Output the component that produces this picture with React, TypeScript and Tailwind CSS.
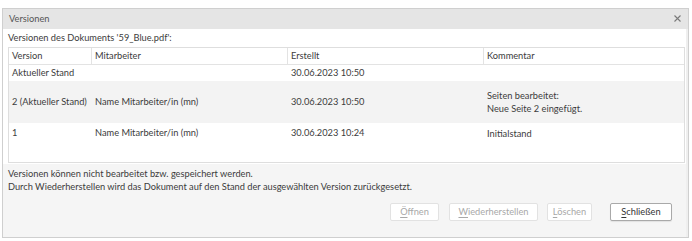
import React from 'react';

type Row = {
  version: string;
  user: string;
  created: string;
  comment: string[];
  shaded?: boolean;
  h: string;
};

const rows: Row[] = [
  { version: 'Aktueller Stand', user: '', created: '30.06.2023 10:50', comment: [], h: 'h-[16px]' },
  {
    version: '2 (Aktueller Stand)',
    user: 'Name Mitarbeiter/in (mn)',
    created: '30.06.2023 10:50',
    comment: ['Seiten bearbeitet:', 'Neue Seite 2 eingefügt.'],
    shaded: true,
    h: 'h-[42px]',
  },
  { version: '1', user: 'Name Mitarbeiter/in (mn)', created: '30.06.2023 10:24', comment: ['Initialstand'], h: 'h-[20px]' },
];

const cols = ['w-[83px]', 'w-[196px]', 'w-[196px]', 'flex-1'];

function DlgButton({ hotkey, rest, enabled, className }: { hotkey: string; rest: string; enabled?: boolean; className: string }) {
  return (
    <button
      className={
        'h-[18px] rounded-[2px] border bg-white leading-none ' +
        (enabled ? 'border-[#a9a9a9] text-[#333] shadow-[0_1px_1px_rgba(0,0,0,0.08)] ' : 'border-[#e2e2e2] text-[#a8a8a8] ') +
        className
      }
    >
      <span className="underline underline-offset-[2px]">{hotkey}</span>
      {rest}
    </button>
  );
}

export default function App() {
  return (
    <div className="w-[692px] h-[241px] bg-white pt-[8px] pl-[2px] text-[9.25px] text-[#3c3c3c]" style={{ fontFamily: 'Lato, "Noto Sans", sans-serif' }}>
      <div className="w-[687px] h-[230px] border border-[#cfcfcf] bg-[#efefef] flex flex-col">
        {/* Title bar */}
        <div className="h-[20px] bg-[#e5e5e5] flex items-center justify-between pl-[6px] pr-[7px] text-[#555]">
          <span>Versionen</span>
          <svg width="7" height="7" viewBox="0 0 7 7" className="mb-[1px]">
            <path d="M0.5 0.5 L6.5 6.5 M6.5 0.5 L0.5 6.5" stroke="#7a7a7a" strokeWidth="1.1" />
          </svg>
        </div>

        {/* Body */}
        <div className="flex-1 flex flex-col mr-[2px]">
          <div className="bg-white pl-[5px] pr-[1px] pb-[1px]">
            <div className="h-[18px] flex items-center">Versionen des Dokuments '59_Blue.pdf':</div>
            <div className="h-[116px] border border-[#dedede] flex flex-col">
              <div className="flex h-[17px] border-b border-[#e3e3e3]">
                {['Version', 'Mitarbeiter', 'Erstellt', 'Kommentar'].map((c, i) => (
                  <div key={c} className={cols[i] + ' flex items-center pl-[3px] ' + (i < 3 ? 'border-r border-[#e3e3e3]' : '')}>
                    {c}
                  </div>
                ))}
              </div>
              {rows.map((r) => (
                <div key={r.version} className={'flex items-center ' + r.h + (r.shaded ? ' bg-[#f3f3f3]' : '')}>
                  <div className={cols[0] + ' pl-[3px] whitespace-nowrap'}>{r.version}</div>
                  <div className={cols[1] + ' pl-[3px]'}>{r.user}</div>
                  <div className={cols[2] + ' pl-[3px]'}>{r.created}</div>
                  <div className={cols[3] + ' pl-[3px] leading-[13px]'}>
                    {r.comment.map((l) => (
                      <div key={l}>{l}</div>
                    ))}
                  </div>
                </div>
              ))}
            </div>
          </div>

          <div className="flex-1 bg-[#f5f5f5] pl-[5px] flex flex-col">
            <div className="mt-[3px] leading-[13px]">Versionen können nicht bearbeitet bzw. gespeichert werden.</div>
            <div className="leading-[13px]">Durch Wiederherstellen wird das Dokument auf den Stand der ausgewählten Version zurückgesetzt.</div>
            <div className="flex justify-end mt-[10px] pr-[14px]">
              <DlgButton hotkey="Ö" rest="ffnen" className="w-[49px]" />
              <DlgButton hotkey="W" rest="iederherstellen" className="w-[89px] ml-[10px]" />
              <DlgButton hotkey="L" rest="öschen" className="w-[45px] ml-[9px]" />
              <DlgButton hotkey="S" rest="chließen" enabled className="w-[62px] ml-[18px]" />
            </div>
          </div>
        </div>
      </div>
    </div>
  );
}
